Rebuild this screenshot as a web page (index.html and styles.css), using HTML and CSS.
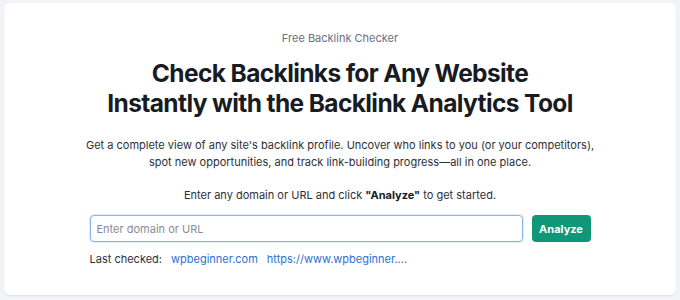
FILE: index.html
```html
<!DOCTYPE html>
<html lang="en">
<head>
    <meta charset="UTF-8">
    <meta name="viewport" content="width=device-width, initial-scale=1.0">
    <title>Free Backlink Checker</title>
    <link rel="stylesheet" href="styles.css">
</head>
<body>
    <div class="card">
        <p class="eyebrow">Free Backlink Checker</p>
        <h1 class="title">Check Backlinks for Any Website<br>Instantly with the Backlink Analytics Tool</h1>
        <p class="lead">Get a complete view of any site's backlink profile. Uncover who links to you (or your competitors),<br>spot new opportunities, and track link-building progress—all in one place.</p>
        <p class="hint">Enter any domain or URL and click <b>"Analyze"</b> to get started.</p>

        <form class="search" onsubmit="return false">
            <input type="text" class="search-input" placeholder="Enter domain or URL">
            <button type="submit" class="search-btn">Analyze</button>
        </form>

        <div class="recent">
            <span class="recent-label">Last checked:</span>
            <a href="#">wpbeginner.com</a>
            <a href="#">https://www.wpbeginner....</a>
        </div>
    </div>
</body>
</html>
```

FILE: styles.css
```css
/* page */
body {
    margin: 0;
    padding: 3px 4px 5px 4px;
    background-color: #f3f4f8;
    font-family: Inter, 'Noto Sans', sans-serif;
    color: #1f2128;
}

/* white card */
.card {
    background-color: #fff;
    border-radius: 6px;
    box-shadow: 0 1px 2px rgba(0,0,0,0.08);
    height: 292px;
    box-sizing: border-box;
    padding-top: 28px;
    text-align: center;
}

.eyebrow {
    margin: 0;
    font-size: 11px;
    line-height: 14px;
    color: #6c6e79;
}

.title {
    margin: 13px 0 0;
    font-size: 24.5px;
    line-height: 30px;
    font-weight: 700;
    letter-spacing: -0.025em;
    color: #191b23;
}

.lead {
    margin: 19px 0 0;
    font-size: 11px;
    line-height: 17px;
    color: #2e3038;
}

.hint {
    margin: 16px 0 0;
    font-size: 11px;
    line-height: 17px;
    color: #2e3038;
}
.hint b { color: #191b23; }

/* search form */
.search {
    display: flex;
    gap: 9px;
    width: 501px;
    margin: 11px auto 0;
}

.search-input {
    flex: 1;
    height: 27px;
    box-sizing: border-box;
    border: 1.5px solid #8bb3f2;
    border-radius: 4px;
    padding: 0 6px;
    font-family: inherit;
    font-size: 11px;
    color: #1f2128;
    outline: none;
    box-shadow: 0 0 0 1px rgba(139,179,242,0.25);
}
.search-input::placeholder { color: #8a8c96; }

.search-btn {
    width: 59px;
    height: 27px;
    border: none;
    border-radius: 4px;
    background-color: #0f9777;
    color: #fff;
    font-family: inherit;
    font-size: 11px;
    font-weight: 700;
    cursor: pointer;
}
.search-btn:hover { background-color: #0b7f63; }

/* recently checked */
.recent {
    display: flex;
    gap: 9px;
    width: 501px;
    margin: 9px auto 0;
    font-size: 11px;
    line-height: 16px;
    color: #2e3038;
}
.recent a {
    color: #2e6fd3;
    text-decoration: none;
}
```
